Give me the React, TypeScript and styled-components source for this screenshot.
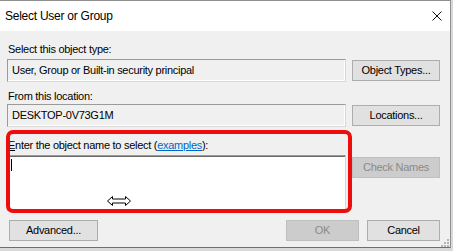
import React from "react";
import styled, { createGlobalStyle } from "styled-components";

const Global = createGlobalStyle`
  html, body { margin: 0; padding: 0; background: #d9d9d9; }
  #root { width: 453px; height: 251px; overflow: hidden; }
  * { box-sizing: border-box; }
`;

const Screen = styled.div`
  width: 453px;
  height: 251px;
  background: #d9d9d9;
  position: relative;
  overflow: hidden;
`;

const Window = styled.div`
  width: 451px;
  height: 248px;
  display: flex;
  flex-direction: column;
  border-top: 1px solid #8f8f8f;
  border-right: 1px solid #8f8f8f;
  border-bottom: 1px solid #6e6e6e;
  background: #f0f0f0;
  position: relative;
`;

const TitleBar = styled.div`
  height: 30px;
  flex: none;
  display: flex;
  align-items: center;
  justify-content: space-between;
  padding: 0 8px 0 5px;
  background: #ffffff;
`;

const Title = styled.span`
  font-family: "Liberation Sans", Arial, sans-serif;
  font-size: 12px;
  line-height: 14px;
  letter-spacing: -0.25px;
  color: #000;
`;

const CloseIcon = styled.svg`
  width: 10px;
  height: 10px;
  display: block;
`;

const Body = styled.div`
  flex: 1;
  position: relative;
  display: flex;
  flex-direction: column;
  padding: 12px 10px 0 7px;
  font-family: "Liberation Sans", Arial, sans-serif;
  font-size: 11px;
  letter-spacing: -0.28px;
  color: #000;
`;

const Label = styled.div<{ $mt: number }>`
  margin: ${(p) => p.$mt}px 0 0 1px;
  height: 13px;
  line-height: 13px;
  white-space: nowrap;
`;

const Mnemonic = styled.span`
  text-decoration: underline;
`;

const Link = styled.span`
  color: #0066cc;
  text-decoration: underline;
`;

const FieldRow = styled.div<{ $mt: number }>`
  margin-top: ${(p) => p.$mt}px;
  display: grid;
  grid-template-columns: 339px 88px;
  column-gap: 6px;
  align-items: start;
`;

const TextBox = styled.div<{ $editable?: boolean; $h: number }>`
  height: ${(p) => p.$h}px;
  background: ${(p) => (p.$editable ? "#ffffff" : "#f0f0f0")};
  border: 1px solid #9a9a9a;
  border-right-color: #d8d8d8;
  border-bottom-color: #d8d8d8;
  box-shadow: ${(p) =>
    p.$editable
      ? "inset 0 1px 0 #696969, inset -1px -1px 0 #ffffff"
      : "inset -1px -1px 0 #ffffff"};
  padding: ${(p) => (p.$editable ? "3px 3px" : "4px 4px")};
  line-height: 13px;
  white-space: nowrap;
  overflow: hidden;
`;

const Caret = styled.div`
  width: 1px;
  height: 12px;
  background: #000;
`;

const Button = styled.div<{ $w?: number; $disabled?: boolean; $mt?: number }>`
  width: ${(p) => (p.$w ? `${p.$w}px` : "auto")};
  height: 21px;
  margin-top: ${(p) => p.$mt ?? 0}px;
  display: flex;
  align-items: center;
  justify-content: center;
  background: ${(p) => (p.$disabled ? "#cccccc" : "#e1e1e1")};
  border: 1px solid ${(p) => (p.$disabled ? "#bfbfbf" : "#adadad")};
  color: ${(p) => (p.$disabled ? "#8a8a8a" : "#000")};
  line-height: 13px;
  white-space: nowrap;
`;

const ButtonRow = styled.div`
  margin-top: 9px;
  display: flex;
  justify-content: space-between;
  align-items: center;
`;

const LeftButtons = styled.div`
  padding-left: 2px;
`;

const RightButtons = styled.div`
  display: flex;
  gap: 8px;
`;

const Highlight = styled.div`
  position: absolute;
  left: 6px;
  top: 99px;
  width: 346px;
  height: 83px;
  border: 4px solid #ee0c0c;
  border-radius: 7px;
  pointer-events: none;
`;

const MouseCursor = styled.svg`
  position: absolute;
  left: 107px;
  top: 165px;
  width: 24px;
  height: 10px;
  overflow: visible;
`;

const Grip = styled.svg`
  position: absolute;
  right: 1px;
  bottom: 0px;
  width: 9px;
  height: 9px;
`;

export default function App() {
  return (
    <>
      <Global />
      <Screen>
        <Window>
          <TitleBar>
            <Title>Select User or Group</Title>
            <CloseIcon viewBox="0 0 10 10">
              <path d="M0.5 0.5 L9.5 9.5 M9.5 0.5 L0.5 9.5" stroke="#111" strokeWidth="1" fill="none" />
            </CloseIcon>
          </TitleBar>
          <Body>
            <Label $mt={0}>Select this object type:</Label>
            <FieldRow $mt={3}>
              <TextBox $h={23}>User, Group or Built-in security principal</TextBox>
              <Button $mt={1}>Object Types...</Button>
            </FieldRow>
            <Label $mt={8}>From this location:</Label>
            <FieldRow $mt={1}>
              <TextBox $h={23}>DESKTOP-0V73G1M</TextBox>
              <Button $mt={1}>Locations...</Button>
            </FieldRow>
            <Label $mt={12}>
              <Mnemonic>E</Mnemonic>nter the object name to select (<Link>examples</Link>):
            </Label>
            <FieldRow $mt={3}>
              <TextBox $editable $h={56}>
                <Caret />
              </TextBox>
              <Button $mt={2} $disabled>
                Check Names
              </Button>
            </FieldRow>
            <ButtonRow>
              <LeftButtons>
                <Button $w={89}>Advanced...</Button>
              </LeftButtons>
              <RightButtons>
                <Button $w={73} $disabled>
                  OK
                </Button>
                <Button $w={73}>Cancel</Button>
              </RightButtons>
            </ButtonRow>
            <Highlight />
            <MouseCursor viewBox="0 0 24 10">
              <path
                d="M0.5 5 L5.5 0.5 L5.5 3 L18.5 3 L18.5 0.5 L23.5 5 L18.5 9.5 L18.5 7 L5.5 7 L5.5 9.5 Z"
                fill="#fff"
                stroke="#000"
                strokeWidth="1"
                strokeLinejoin="miter"
              />
            </MouseCursor>
            <Grip viewBox="0 0 9 9">
              <g fill="#b5b5b5">
                <rect x="7" y="1" width="2" height="2" />
                <rect x="4" y="4" width="2" height="2" />
                <rect x="7" y="4" width="2" height="2" />
                <rect x="1" y="7" width="2" height="2" />
                <rect x="4" y="7" width="2" height="2" />
                <rect x="7" y="7" width="2" height="2" />
              </g>
            </Grip>
          </Body>
        </Window>
      </Screen>
    </>
  );
}
